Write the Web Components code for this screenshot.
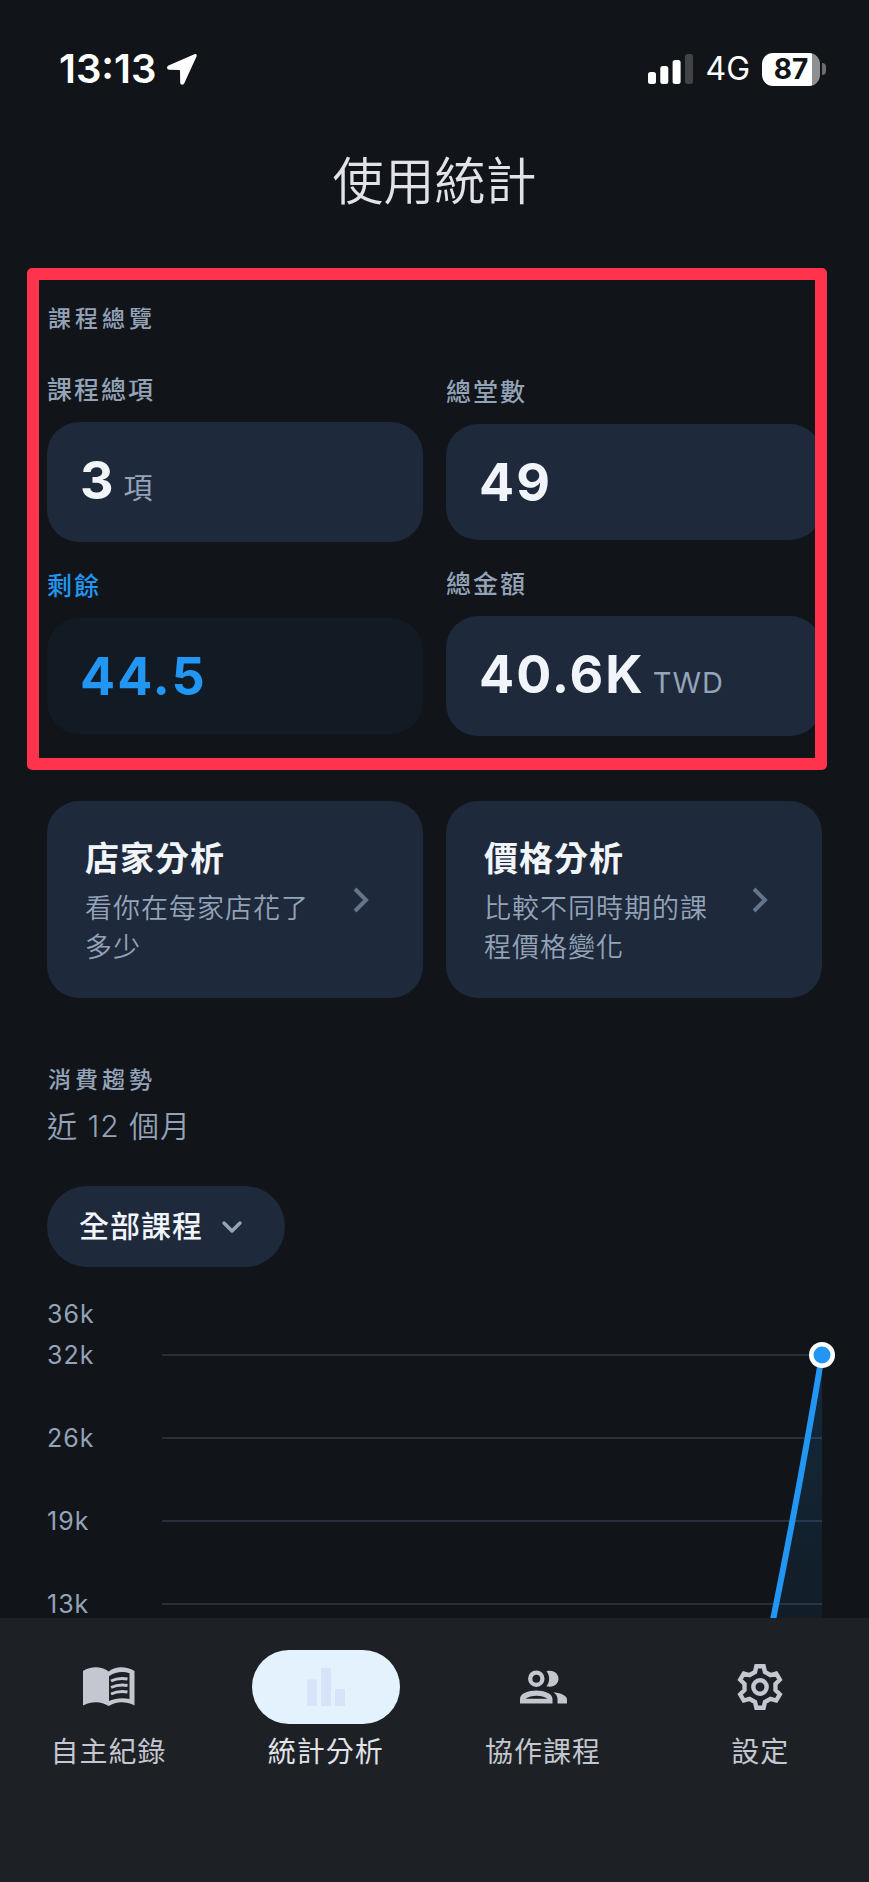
<!DOCTYPE html>
<html lang="zh-Hant">
<head>
<meta charset="utf-8">
<meta name="viewport" content="width=device-width, initial-scale=1">
<title>使用統計</title>
<style>
  :root {
    --bg: #111418;
    --surface: #1e293b;
    --nav: #1d2024;
    --text: #f1f5f9;
    --muted: #94a3b8;
    --dim: #64748b;
    --accent: #2196f3;
    --mark: #ff334b;
  }
  body {
    margin: 0;
    background: var(--bg);
    color: var(--text);
    font-family: Inter, "Noto Sans CJK TC", sans-serif;
  }
</style>
</head>
<body>
<usage-app>
  <status-bar slot="status"></status-bar>
  <page-title slot="title">使用統計</page-title>

  <overview-panel>
    <section-title slot="title">課程總覽</section-title>
    <stat-card label="課程總項" unit="項">3</stat-card>
    <stat-card label="總堂數">49</stat-card>
    <stat-card label="剩餘" accent>44.5</stat-card>
    <stat-card label="總金額" unit="TWD">40.6K</stat-card>
  </overview-panel>

  <action-row>
    <action-card href="#stores" label="店家分析">看你在每家店花了多少</action-card>
    <action-card href="#prices" label="價格分析">比較不同時期的課程價格變化</action-card>
  </action-row>

  <trend-panel>
    <section-title slot="title">消費趨勢</section-title>
    <span slot="range">近 12 個月</span>
    <course-filter slot="filter"></course-filter>
    <trend-chart slot="chart"></trend-chart>
  </trend-panel>

  <bottom-nav slot="nav">
    <nav-item href="#records" icon="book">自主紀錄</nav-item>
    <nav-item href="#stats" icon="bars" active>統計分析</nav-item>
    <nav-item href="#shared" icon="people">協作課程</nav-item>
    <nav-item href="#settings" icon="gear">設定</nav-item>
  </bottom-nav>
</usage-app>

<script>
const define = (name, render) => customElements.define(name, class extends HTMLElement {
  connectedCallback() {
    if (this.shadowRoot) return;
    this.attachShadow({ mode: 'open' }).innerHTML = render(this);
  }
});

define('usage-app', () => `
  <style>
    :host { display: flex; flex-direction: column; min-height: 100vh; }
    main { flex: 1; }
    ::slotted([slot=nav]) { position: sticky; bottom: 0; }
  </style>
  <slot name="status"></slot>
  <slot name="title"></slot>
  <main><slot></slot></main>
  <slot name="nav"></slot>`);

define('status-bar', () => `
  <style>
    :host { display: flex; align-items: center; justify-content: space-between;
      padding: 46px 43px 0 59px; color: #fff; line-height: 46px; }
    div { display: flex; align-items: center; }
    svg { display: block; }
    .time { gap: 11px; font-size: 40px; font-weight: 600; }
    .signal { gap: 12px; font-size: 32px; }
    .battery { display: flex; align-items: center; gap: 2px; }
    .level { width: 58px; height: 33px; border-radius: 11px; line-height: 33px; text-align: center;
      color: #111418; font-size: 28px; font-weight: 700;
      background: linear-gradient(90deg, #fff 87%, #8e8f91 87%); }
    .nub { width: 4px; height: 12px; border-radius: 0 4px 4px 0; background: #6b6d70; }
  </style>
  <div class="time"><span>13:13</span>
    <svg width="30" height="31" viewBox="0 0 30 31"><path fill="#fff" d="M27.4.3 1.5 11.6c-2.2 1-1.8 4 .7 4.1l9.8.3c.6 0 1 .4 1 1l.2 11.4c.1 2.7 3.2 3 4.2.7L29.5 2.600C30.300.9 29-.4 27.400.3Z"/></svg>
  </div>
  <div class="signal">
    <svg width="45" height="30" viewBox="0 0 45 30" fill="#fff"><rect y="18" width="8" height="12" rx="2.500"/><rect x="12.300" y="12" width="8" height="18" rx="2.500"/><rect x="24.600" y="6" width="8" height="24" rx="2.500"/><rect x="37" width="8" height="30" rx="2.500" fill="#414347"/></svg>
    <span>4G</span>
    <span class="battery"><span class="level">87</span><span class="nub"></span></span>
  </div>`);

define('page-title', () => `
  <style>
    :host { display: block; padding: 60px 24px 56px; }
    h1 { margin: 0; text-align: center; font-size: 51px; line-height: 60px; font-weight: 350; color: #e2e2e9; }
  </style>
  <h1><slot></slot></h1>`);

define('section-title', () => `
  <style>
    :host { display: block; }
    h2 { margin: 0; font-size: 23px; line-height: 28px; font-weight: 500; letter-spacing: 4px; color: var(--muted); padding-left: 1px; }
  </style>
  <h2><slot></slot></h2>`);

define('overview-panel', () => `
  <style>
    :host { display: block; position: relative; padding: 37px 47px 34px; }
    .grid { display: grid; grid-template-columns: 1fr 1fr; align-items: center; gap: 27px 23px; margin-top: 42px; }
    .frame { position: absolute; inset: 0 42px 0 27px; border-radius: 5px; border: 12px solid var(--mark); pointer-events: none; }
  </style>
  <slot name="title"></slot>
  <div class="grid"><slot></slot></div>
  <div class="frame"></div>`);

define('stat-card', el => {
  const unit = el.getAttribute('unit');
  return `
  <style>
    :host { display: block; }
    h3 { margin: 0 0 17px; font-size: 25px; line-height: 30px; font-weight: 500; letter-spacing: 2px; color: var(--muted); }
    p { margin: 0; display: flex; align-items: baseline; gap: 8px; padding: 28px 33px 26px; border-radius: 32px;
      background: var(--surface); font-size: 52px; line-height: 62px; font-weight: 700; letter-spacing: 2px; }
    :host([unit]) p { padding-block: 28px 30px; }
    :host([accent]) h3 { color: var(--accent); }
    :host([accent]) p { color: var(--accent); background: #121a24; }
    small { font-size: 29px; font-weight: 400; letter-spacing: 1px; color: var(--muted); line-height: 36px; }
  </style>
  <h3>${el.getAttribute('label')}</h3>
  <p><span><slot></slot></span>${unit ? `<small>${unit}</small>` : ''}</p>`;
});

define('action-row', () => `
  <style>
    :host { display: grid; grid-template-columns: 1fr 1fr; gap: 23px; padding: 31px 47px 0; }
  </style>
  <slot></slot>`);

define('action-card', el => `
  <style>
    :host { display: block; }
    a { display: flex; align-items: center; gap: 36px; padding: 31px 54px 31px 38px; border-radius: 32px;
      background: var(--surface); color: var(--text); text-decoration: none; }
    div { flex: 1; }
    h3 { margin: 0 0 4px; font-size: 34px; line-height: 53px; font-weight: 600; letter-spacing: 1px; }
    p { margin: 0; font-size: 27px; line-height: 39px; font-weight: 350; letter-spacing: 1px; color: var(--muted); }
    svg { flex: none; display: block; }
  </style>
  <a href="${el.getAttribute('href')}">
    <div><h3>${el.getAttribute('label')}</h3><p><slot></slot></p></div>
    <svg width="16" height="26" viewBox="0 0 16 26" fill="none" stroke="#64748b" stroke-width="4"><path d="M2 2 13 13 2 24"/></svg>
  </a>`);

define('trend-panel', () => `
  <style>
    :host { display: block; padding: 68px 47px 0; }
    p { margin: 14px 0 42px; font-size: 30px; line-height: 36px; font-weight: 350; letter-spacing: 1px; color: var(--muted); }
    ::slotted([slot=chart]) { margin-top: 33px; }
  </style>
  <slot name="title"></slot>
  <p><slot name="range"></slot></p>
  <slot name="filter"></slot>
  <slot name="chart"></slot>`);

define('course-filter', () => `
  <style>
    :host { display: grid; justify-content: start; align-items: center; }
    select, svg { grid-area: 1 / 1; }
    select { appearance: none; margin: 0; border: 0; border-radius: 40px; padding: 20px 82px 20px 32px; background: var(--surface);
      color: var(--text); font: 500 30px/41px Inter, "Noto Sans CJK TC", sans-serif; letter-spacing: 1px; height: 81px; }
    svg { justify-self: end; margin-right: 42px; pointer-events: none; }
  </style>
  <select aria-label="課程"><option>全部課程</option></select>
  <svg width="22" height="14" viewBox="0 0 22 14" fill="none" stroke="#94a3b8" stroke-width="3.500" stroke-linecap="round" stroke-linejoin="round"><path d="M3 3 11 11 19 3"/></svg>`);

define('trend-chart', () => `
  <style>
    :host { display: flex; flex-direction: column; position: relative; font-size: 25px; line-height: 28px; font-weight: 400; letter-spacing: 1px; color: var(--muted); }
    .top { margin-bottom: 13px; }
    .rows { display: flex; flex-direction: column; gap: 55px; }
    .row { display: flex; align-items: center; }
    .row span { width: 115px; }
    .row i { flex: 1; height: 2px; background: #272f3c; }
    svg { position: absolute; right: -14px; bottom: 0; display: block; }
  </style>
  <div class="top">36k</div>
  <div class="rows">${['32k', '26k', '19k', '13k'].map(t => `<div class="row"><span>${t}</span><i></i></div>`).join('')}</div>
  <svg width="74" height="278" viewBox="0 0 74 278" aria-hidden="true">
    <defs><linearGradient id="fade" x1="0" y1="0" x2="0" y2="1"><stop stop-color="#2196f3" stop-opacity=".16"/><stop offset="1" stop-color="#2196f3" stop-opacity=".07"/></linearGradient></defs>
    <path fill="url(#fade)" d="M60 15C50 75 32 176 11 280H60Z"/>
    <path fill="none" stroke="#2196f3" stroke-width="6" d="M60 15C50 75 32 176 11 280"/>
    <circle cx="60" cy="15" r="13" fill="#fff"/><circle cx="60" cy="15" r="8.500" fill="#2196f3"/>
  </svg>`);

define('bottom-nav', () => `
  <style>
    :host { display: block; background: var(--nav); }
    nav { display: grid; grid-template-columns: repeat(4, 1fr); padding: 32px 0 112px; }
  </style>
  <nav><slot></slot></nav>`);

/* Gear outline: one tooth's points repeated every 60 degrees. */
const gearPoints = Array.from({ length: 6 }, (_, i) => {
  const a = i * Math.PI / 3, c = Math.cos(a), s = Math.sin(a);
  return [[-5, -15], [-3.600, -20.800], [3.600, -20.800], [5, -15]]
    .map(([x, y]) => `${(x * c - y * s).toFixed(2)},${(x * s + y * c).toFixed(2)}`).join(' ');
}).join(' ');

const icons = {
  book: `<svg width="52" height="40" viewBox="0 0 52 40"><path fill="currentColor" fill-rule="evenodd" d="M0 4C8-1 18-1 25.700 4.500 33-1 43-1 51.500 4V38.500C43 34 33 34 25.700 39 18 34 9 34 0 38.500ZM26 9.200V34C33 30.800 40 30.500 46.500 32V6.300C40 4 32 5 26 9.200Z"/><path fill="none" stroke="currentColor" stroke-width="3" d="M28 14C33 11.600 39 11 44.500 12M28 20.500C33 18.100 39 17.500 44.500 18.500M28 27C33 24.600 39 24 44.500 25"/></svg>`,
  bars: `<svg width="38" height="38" viewBox="0 0 38 38" fill="currentColor"><path d="M0 11.500h10V38H0zM14 0h10v38H14zM28 21h10v17H28z"/></svg>`,
  people: `<svg width="47" height="34" viewBox="0 0 47 34" fill="currentColor"><circle cx="16.300" cy="8.700" r="6.100" fill="none" stroke="currentColor" stroke-width="4.300"/><path fill-rule="evenodd" d="M0 33.500V29C0 17.500 32.500 17.500 32.500 29v4.500ZM5.500 28.800H27.500C22 24.600 11 24.600 5.500 28.800Z"/><path d="M26.500 1.200C34 -.8 38.500 4 38.500 8.700S34 18.200 26.500 16.200C30 12 30 5.400 26.500 1.200ZM33.500 22.200C42 23 47 26 47 29.500v4H37.500V29C37.500 26 36 24 33.500 22.200Z"/></svg>`,
  gear: `<svg width="48" height="48" viewBox="-24 -24 48 48" fill="none" stroke="currentColor" stroke-width="4.400"><polygon stroke-linejoin="miter" points="${gearPoints}"/><circle r="6.700"/></svg>`
};

define('nav-item', el => `
  <style>
    :host { display: block; color: #c4c6d0; }
    a { display: flex; flex-direction: column; align-items: center; gap: 10px; color: inherit; text-decoration: none;
      font-size: 28px; line-height: 36px; font-weight: 400; letter-spacing: 1px; }
    .pill { display: grid; place-items: center; width: 148px; height: 74px; border-radius: 37px; }
    svg { display: block; }
    :host([active]) { color: #e2e2e9; }
    :host([active]) .pill { background: #e3f2fd; color: #d7e3f6; }
  </style>
  <a href="${el.getAttribute('href')}" ${el.hasAttribute('active') ? 'aria-current="page"' : ''}>
    <span class="pill">${icons[el.getAttribute('icon')]}</span>
    <span><slot></slot></span>
  </a>`);
</script>
</body>
</html>
